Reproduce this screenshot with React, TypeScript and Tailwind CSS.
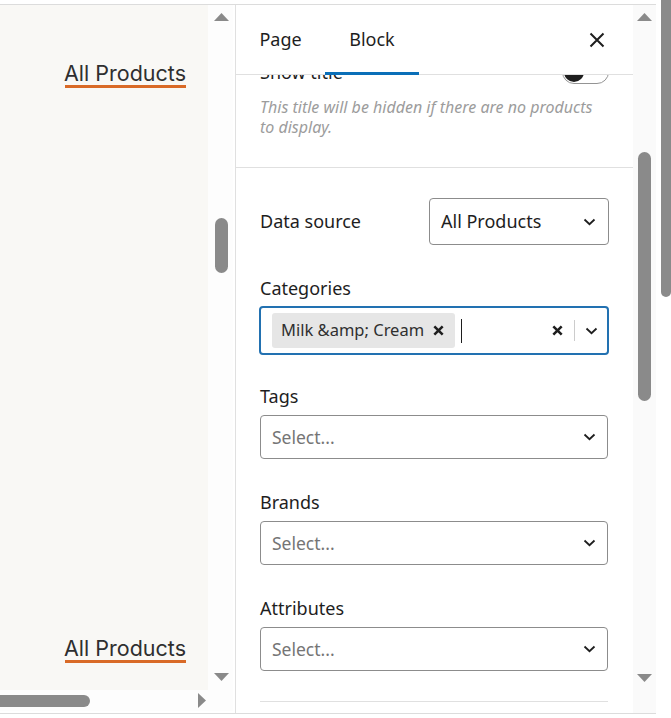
import React from 'react';

const ui = { fontFamily: '"Noto Sans", "Open Sans", sans-serif' };
const canvasFont = { fontFamily: 'Inter, "Noto Sans", sans-serif' };

const Chevron = () => (
  <svg width="13" height="8" viewBox="0 0 13 8" className="shrink-0">
    <path d="M1.5 1.5 L6.5 6.2 L11.5 1.5" fill="none" stroke="#1e1e1e" strokeWidth="1.8" />
  </svg>
);

const SmallX = ({ size = 11 }: { size?: number }) => (
  <svg width={size} height={size} viewBox="0 0 10 10" className="shrink-0">
    <path d="M1.2 1.2 L8.8 8.8 M8.8 1.2 L1.2 8.8" stroke="#1e1e1e" strokeWidth="2.3" />
  </svg>
);

const ArrowUp = () => (
  <svg width="15" height="8" viewBox="0 0 15 8"><path d="M7.5 0 L15 8 L0 8 Z" fill="#8a8a8a" /></svg>
);
const ArrowDown = () => (
  <svg width="15" height="8" viewBox="0 0 15 8"><path d="M0 0 L15 0 L7.5 8 Z" fill="#8a8a8a" /></svg>
);
const ArrowRight = () => (
  <svg width="8" height="15" viewBox="0 0 8 15"><path d="M0 0 L8 7.5 L0 15 Z" fill="#8a8a8a" /></svg>
);

const PlaceholderSelect = ({ label, mt }: { label: string; mt: string }) => (
  <div className={mt}>
    <div className="text-[18px] leading-[24px] text-[#1e1e1e]">{label}</div>
    <div className="mt-[7px] h-[44px] w-[348px] rounded-[4px] border border-[#8c8c8c] flex items-center pl-[11px] pr-[11px]">
      <span className="flex-1 text-[17.5px] text-[#757575]">Select...</span>
      <Chevron />
    </div>
  </div>
);

const CanvasTitle = () => (
  <div className="flex flex-col items-end pr-[22px]" style={canvasFont}>
    <span className="text-[21.5px] leading-[24px] text-[#2f2f2f]">All Products</span>
    <span className="h-[3px] w-[121px] bg-[#d96a27]" />
  </div>
);

export default function App() {
  return (
    <div className="w-[671px] h-[718px] bg-white flex overflow-hidden" style={ui}>
      <div className="w-[659px] flex flex-col">
        <div className="h-[4px] shrink-0" />
        <div className="h-[1px] w-[656px] bg-[#dcdcdc] shrink-0" />
        <div className="h-[708px] flex shrink-0">
          {/* canvas column */}
          <div className="w-[235px] flex flex-col">
            <div className="h-[685px] flex">
              <div className="w-[208px] bg-[#f9f8f5] flex flex-col justify-between pt-[56px] pb-[27px]">
                <CanvasTitle />
                <CanvasTitle />
              </div>
              <div className="w-[25px] bg-[#fdfdfd] flex flex-col items-center pl-[2px] pt-[8px] pb-[9px]">
                <ArrowUp />
                <div className="mt-[197px] w-[13px] h-[55px] rounded-full bg-[#8a8a8a]" />
                <div className="flex-1" />
                <ArrowDown />
              </div>
              <div className="w-[2px]" />
            </div>
            <div className="h-[21px] flex items-center bg-[#fdfdfd] w-[233px]">
              <div className="w-[90px] h-[12px] rounded-r-full bg-[#8a8a8a]" />
              <div className="flex-1" />
              <div className="mr-[27px]"><ArrowRight /></div>
            </div>
          </div>
          <div className="w-[1px] bg-[#e0e0e0]" />
          {/* sidebar */}
          <div className="w-[397px] flex flex-col relative">
            <div className="h-[70px] flex items-stretch border-b border-[#e0e0e0] bg-white relative z-10 shrink-0">
              <div className="w-[89px] flex items-center justify-center text-[18px] text-[#1e1e1e]">Page</div>
              <div className="w-[94px] flex items-center justify-center text-[18px] text-[#1e1e1e] relative">
                Block
                <span className="absolute left-0 right-0 -bottom-[1px] h-[3px] bg-[#0a6fb8]" />
              </div>
              <div className="flex-1" />
              <div className="flex items-center pr-[28px]">
                <svg width="16" height="16" viewBox="0 0 16 16">
                  <path d="M1.5 1.5 L14.5 14.5 M14.5 1.5 L1.5 14.5" stroke="#1e1e1e" strokeWidth="2" />
                </svg>
              </div>
            </div>
            <div className="flex-1 overflow-hidden">
              <div className="-mt-[15px] px-[24px]">
                <div className="flex items-center justify-between h-[24px]">
                  <span className="text-[18px] text-[#1e1e1e]">Show title</span>
                  <div className="w-[47px] h-[24px] rounded-full border border-[#949494] flex items-center px-[1px]">
                    <div className="w-[20px] h-[20px] rounded-full bg-[#1e1e1e]" />
                  </div>
                </div>
                <p className="mt-[13px] w-[340px] text-[16px] leading-[20px] italic text-[#9c9c9c]">
                  This title will be hidden if there are no products to display.
                </p>
              </div>
              <div className="mt-[30px] h-[1px] bg-[#e0e0e0]" />
              <div className="px-[24px]">
                <div className="mt-[30px] flex items-center justify-between">
                  <span className="text-[18px] text-[#1e1e1e]">Data source</span>
                  <div className="w-[180px] h-[47px] rounded-[4px] border border-[#8c8c8c] flex items-center pl-[11px] pr-[12px]">
                    <span className="flex-1 text-[18px] text-[#1e1e1e]">All Products</span>
                    <Chevron />
                  </div>
                </div>
                <div className="mt-[31px]">
                  <div className="text-[18px] leading-[24px] text-[#1e1e1e]">Categories</div>
                  <div className="mt-[6px] h-[49px] w-[350px] -ml-[1px] rounded-[4px] border-2 border-[#2271b1] flex items-center pl-[11px] pr-[9px]">
                    <div className="h-[35px] w-[183px] rounded-[3px] bg-[#e6e6e6] flex items-center pl-[9px] pr-[11px]">
                      <span className="flex-1 text-[16.5px] text-[#2f2f2f]">{'Milk &amp; Cream'}</span>
                      <SmallX />
                    </div>
                    <span className="ml-[6px] w-[1px] h-[24px] bg-[#1e1e1e]" />
                    <div className="flex-1" />
                    <SmallX />
                    <span className="ml-[11px] w-[1px] h-[21px] bg-[#cccccc]" />
                    <div className="ml-[10px]"><Chevron /></div>
                  </div>
                </div>
                <PlaceholderSelect label="Tags" mt="mt-[29px]" />
                <PlaceholderSelect label="Brands" mt="mt-[31px]" />
                <PlaceholderSelect label="Attributes" mt="mt-[31px]" />
                <div className="mt-[30px] h-[1px] w-[348px] bg-[#e0e0e0]" />
              </div>
            </div>
          </div>
          {/* sidebar scrollbar */}
          <div className="w-[23px] bg-[#fafafa] flex flex-col items-center pt-[8px] pb-[31px]">
            <ArrowUp />
            <div className="mt-[131px] w-[13px] h-[249px] rounded-full bg-[#8a8a8a]" />
            <div className="flex-1" />
            <ArrowDown />
          </div>
        </div>
        <div className="h-[1px] w-[656px] bg-[#dcdcdc] shrink-0" />
      </div>
      <div className="w-[12px] flex flex-col">
        <div className="ml-[2px] w-[10px] h-[297px] rounded-b-full bg-[#8a8a8a]" />
      </div>
    </div>
  );
}
